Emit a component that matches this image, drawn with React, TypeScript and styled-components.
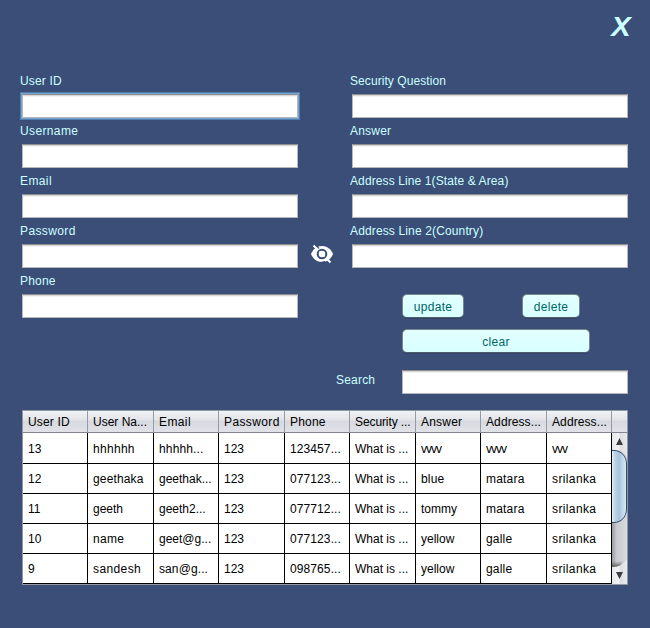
import React from "react";
import styled, { createGlobalStyle } from "styled-components";

const GlobalStyle = createGlobalStyle`
  * { box-sizing: border-box; }
  html, body { margin: 0; padding: 0; }
  body {
    background: #3a4e78;
    font-family: "Liberation Sans", Arial, sans-serif;
    font-size: 12px;
  }
`;

const Window = styled.main`
  width: 650px;
  height: 628px;
  overflow: hidden;
  background: #3a4e78;
`;

const TitleBar = styled.header`
  display: flex;
  justify-content: flex-end;
  height: 68px;
  padding: 12px 19px 0 0;
`;

const CloseButton = styled.button`
  width: 20px;
  height: 30px;
  padding: 0;
  border: 0;
  background: none;
  color: #ccffff;
  font: italic bold 27px/30px "Liberation Sans", Arial, sans-serif;
  transform: scaleX(1.08);
`;

const Form = styled.div`
  display: grid;
  grid-template-columns: 278px 52px 278px;
  height: 342px;
  padding-left: 20px;
`;

const Column = styled.div`
  display: flex;
  flex-direction: column;
`;

const Group = styled.div`
  height: 50px;
`;

const Label = styled.label<{ $spacing?: number }>`
  display: block;
  height: 26px;
  color: #ccffff;
  line-height: 26px;
  white-space: nowrap;
  letter-spacing: ${(p) => p.$spacing ?? 0}px;
`;

const Field = styled.input<{ $focused?: boolean; $width?: number }>`
  display: block;
  width: ${(p) => p.$width ?? 276}px;
  height: 24px;
  margin-left: 2px;
  padding: 0 6px;
  border: 1px solid #b6b8bb;
  border-top-color: #8d8e90;
  border-radius: 0;
  outline: none;
  background: linear-gradient(#d6d6d6 0 1px, #f3f3f3 1px 2px, #fff 2px);
  box-shadow: ${(p) => (p.$focused ? "0 0 0 1px #73a4d1, 0 0 0 2px #547fad" : "none")};
`;

const EyeSlot = styled.div`
  padding: 174px 0 0 12px;
`;

const Actions = styled.div`
  display: grid;
  grid-template-columns: 62px 58px 58px 10px;
  grid-template-rows: 24px 24px;
  gap: 11px 0;
  justify-content: start;
  padding: 26px 0 0 52px;
`;

const Button = styled.button<{ $column: string }>`
  grid-column: ${(p) => p.$column};
  padding: 2px 0 0;
  border: 1px solid #77878f;
  border-bottom-color: #4b5b68;
  border-radius: 5px;
  background: linear-gradient(#e3ffff, #d8ffff);
  box-shadow: 0 1px 0 #35466a;
  color: #006666;
  font: 12px/20px "Liberation Sans", Arial, sans-serif;
  letter-spacing: 0.3px;
`;

const SearchRow = styled.div`
  display: flex;
  margin: 17px 0 0 -14px;

  ${Label} {
    width: 64px;
    height: 20px;
    line-height: 20px;
  }
`;

const Table = styled.section`
  display: grid;
  grid-template-rows: 22px 151px;
  width: 606px;
  height: 175px;
  margin-left: 22px;
  border: 1px solid #9297a1;
`;

const columns = "65px 66px 65px 66px 65px 66px 65px 66px 65px";

const HeaderRow = styled.div`
  display: grid;
  grid-template-columns: ${columns} 1fr;
  border-bottom: 1px solid #82858f;
  background: linear-gradient(#f2f3f6 0, #e3e4e9 9px, #d6d9df 10px, #e0e2e8 100%);
`;

const HeaderCell = styled.div<{ $spacing?: number }>`
  padding-left: 5px;
  border-right: 1px solid #969aa5;
  line-height: 22px;
  white-space: nowrap;
  letter-spacing: ${(p) => p.$spacing ?? 0}px;

  &:last-child { border-right: 0; }
`;

const Viewport = styled.div`
  display: grid;
  grid-template-columns: 589px 15px;
  height: 151px;
`;

const Rows = styled.div`
  height: 151px;
  overflow: hidden;
  background: #fff;
`;

const Row = styled.div`
  display: grid;
  grid-template-columns: ${columns};
  height: 30px;
`;

const Cell = styled.div<{ $spacing?: number }>`
  padding: 2px 0 0 5px;
  border-right: 1px solid #000;
  border-bottom: 1px solid #000;
  color: #000;
  line-height: 28px;
  white-space: nowrap;
  letter-spacing: ${(p) => p.$spacing ?? 0}px;
`;

const tracking: Record<string, number> = {
  "User ID": 0.15,
  Username: 0.37,
  Email: 0.4,
  Password: 0.38,
  Phone: 0.2,
  "Security Question": 0.07,
  Answer: 0.2,
  "Address Line 1(State & Area)": 0.11,
  "Address Line 2(Country)": 0.14,
  Search: 0.2,
  "Security ...": -0.1,
  "Address...": 0.1,
  hhhhhh: 0.3,
  "hhhhh...": 0.15,
  geethaka: 0.15,
  sandesh: 0.4,
  name: 0.3,
  "san@g...": 0.1,
  "123457...": 0.1,
  "077123...": 0.1,
  "077712...": 0.1,
  "098765...": 0.1,
  vvvv: -1,
  vvv: -1,
  blue: 0.2,
  matara: 0.2,
  galle: 0.2,
  srilanka: 0.38,
};

const headers = ["User ID", "User Na...", "Email", "Password", "Phone", "Security ...", "Answer", "Address...", "Address..."];

const records = [
  ["13", "hhhhhh", "hhhhh...", "123", "123457...", "What is ...", "vvvv", "vvvv", "vvv"],
  ["12", "geethaka", "geethak...", "123", "077123...", "What is ...", "blue", "matara", "srilanka"],
  ["11", "geeth", "geeth2...", "123", "077712...", "What is ...", "tommy", "matara", "srilanka"],
  ["10", "name", "geet@g...", "123", "077123...", "What is ...", "yellow", "galle", "srilanka"],
  ["9", "sandesh", "san@g...", "123", "098765...", "What is ...", "yellow", "galle", "srilanka"],
  ["", "", "", "", "", "", "", "", ""],
];

const HiddenEye = () => (
  <svg width="24" height="24" viewBox="0 0 24 24" aria-label="Hide password">
    <path d="M1 12C3 7 7 4 12 4S21 7 23 12C21 17 17 20 12 20S3 17 1 12Z" fill="#fff" />
    <path d="M5 2.500 9 6.500M15 19.500 11 20.500" stroke="#3a4e78" strokeWidth="1.200" />
    <circle cx="12" cy="12" r="4.300" fill="#fff" stroke="#3a4e78" strokeWidth="2" />
    <path d="M9.500 9.500 14.500 14.500" stroke="#fff" strokeWidth="2" />
    <path d="M3.500 3.500 8 8M16 16 20.500 20.500" stroke="#fff" strokeWidth="2" />
  </svg>
);

const ScrollBar = () => (
  <svg width="15" height="151" viewBox="0 0 15 151" aria-label="Vertical scroll bar">
    <defs>
      <linearGradient id="track">
        <stop offset="0" stopColor="#999ca3" />
        <stop offset="0.3" stopColor="#c7c9ce" />
        <stop offset="1" stopColor="#d9dade" />
      </linearGradient>
      <linearGradient id="thumb">
        <stop offset="0" stopColor="#e0edf7" />
        <stop offset="0.25" stopColor="#b9cfe3" />
        <stop offset="0.5" stopColor="#a9c2dc" />
        <stop offset="1" stopColor="#d9f0fa" />
      </linearGradient>
      <linearGradient id="arrow">
        <stop offset="0" stopColor="#e7e8ec" />
        <stop offset="0.45" stopColor="#f2f3f5" />
        <stop offset="0.55" stopColor="#dcdee2" />
        <stop offset="1" stopColor="#e9eaed" />
      </linearGradient>
      <linearGradient id="trackEnd" x2="0" y2="1">
        <stop offset="0" stopColor="#777" stopOpacity="0" />
        <stop offset="1" stopColor="#555" />
      </linearGradient>
    </defs>
    <rect width="15" height="151" fill="url(#track)" />
    <path d="M0 0H15V24C13 19 9 17.500 5 17.500H0Z" fill="url(#arrow)" />
    <path d="M0 128H12L7 134H0Z" fill="url(#trackEnd)" />
    <path d="M0 134C8 134 11 131 15 126V151H0Z" fill="url(#arrow)" />
    <path d="M0 17.500H2C9 17.500 14.500 23 14.500 31V76C14.500 84 9 89.500 2 89.500H0Z" fill="url(#thumb)" />
    <path d="M0 17.500H2C9 17.500 14.500 23 14.500 31V76C14.500 84 9 89.500 2 89.500H0" fill="none" stroke="#2e4b67" />
    <path d="M4 12 7.500 5 11 12ZM4 139H11L7.500 146Z" fill="#3d3d3d" />
  </svg>
);

const leftFields = ["User ID", "Username", "Email", "Password", "Phone"];
const rightFields = ["Security Question", "Answer", "Address Line 1(State & Area)", "Address Line 2(Country)"];

export default function App() {
  return (
    <Window>
      <GlobalStyle />
      <TitleBar>
        <CloseButton>X</CloseButton>
      </TitleBar>
      <Form>
        <Column>
          {leftFields.map((name, i) => (
            <Group key={name}>
              <Label $spacing={tracking[name]}>{name}</Label>
              <Field $focused={i === 0} />
            </Group>
          ))}
        </Column>
        <EyeSlot><HiddenEye /></EyeSlot>
        <Column>
          {rightFields.map((name) => (
            <Group key={name}>
              <Label $spacing={tracking[name]}>{name}</Label>
              <Field />
            </Group>
          ))}
          <Actions>
            <Button $column="1">update</Button>
            <Button $column="3">delete</Button>
            <Button $column="1 / 5">clear</Button>
          </Actions>
          <SearchRow>
            <Label $spacing={tracking.Search}>Search</Label>
            <Field $width={226} />
          </SearchRow>
        </Column>
      </Form>
      <Table>
        <HeaderRow>
          {headers.map((text, i) => <HeaderCell key={i} $spacing={tracking[text]}>{text}</HeaderCell>)}
          <HeaderCell />
        </HeaderRow>
        <Viewport>
          <Rows>
            {records.map((record, i) => (
              <Row key={i}>
                {record.map((text, j) => <Cell key={j} $spacing={tracking[text]}>{text}</Cell>)}
              </Row>
            ))}
          </Rows>
          <ScrollBar />
        </Viewport>
      </Table>
    </Window>
  );
}
